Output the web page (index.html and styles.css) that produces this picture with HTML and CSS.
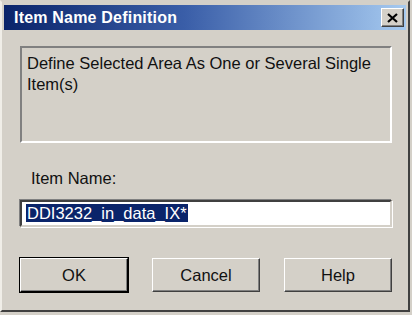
FILE: index.html
```html
<!DOCTYPE html>
<html lang="en">
<head>
    <meta charset="UTF-8">
    <title>Item Name Definition</title>
    <link rel="stylesheet" href="styles.css">
</head>
<body>

    <div class="window">
        <div class="titlebar">
            <span class="title">Item Name Definition</span>
            <button class="close-btn" aria-label="Close">
                <svg width="11" height="10" viewBox="0 0 11 10">
                    <path d="M1 1 L10 9 M10 1 L1 9" stroke="#000" stroke-width="2.2" fill="none"/>
                </svg>
            </button>
        </div>

        <div class="content">
            <div class="description">
                Define Selected Area As One or Several Single Item(s)
            </div>

            <div class="field-label">Item Name:</div>
            <div class="input-box">
                <span class="selected">DDI3232_in_data_IX*</span>
            </div>

            <div class="buttons">
                <button class="btn default">OK</button>
                <button class="btn">Cancel</button>
                <button class="btn">Help</button>
            </div>
        </div>
    </div>

</body>
</html>
```

FILE: styles.css
```css
/* Classic win-style dialog */
:root {
    --face: #d4d0c8;
    --light: #ffffff;
    --shadow: #808080;
    --dark: #404040;
    --select: #0a246a;
}

html, body {
    margin: 0;
    height: 100%;
    overflow: hidden;
    background: var(--face);
}

body {
    font-family: "Liberation Sans", Arial, sans-serif;
    color: #111;
}

.window {
    width: 410px;
    height: 312px;
    box-sizing: border-box;
    background: var(--face);
    border-top: 2px solid var(--face);
    border-left: 2px solid #f0eee8;
    border-right: 2px solid var(--dark);
    border-bottom: 2px solid var(--dark);
    padding: 3px 2px 0 2px;
}

.titlebar {
    height: 25px;
    display: flex;
    align-items: center;
    justify-content: space-between;
    padding: 0 2px 0 10px;
    background: linear-gradient(to right, #0a246a 0%, #3a5ea8 45%, #a6caf0 100%);
}

.title {
    color: #fff;
    font-weight: bold;
    font-size: 16px;
    letter-spacing: 0.2px;
}

.close-btn {
    width: 23px;
    height: 19px;
    padding: 0;
    display: flex;
    align-items: center;
    justify-content: center;
    background: var(--face);
    border: 1px solid;
    border-color: var(--light) var(--dark) var(--dark) var(--light);
    box-shadow: inset -1px -1px 0 var(--shadow);
}

.content {
    padding: 16px 14px 0 16px;
}

.description {
    height: 97px;
    box-sizing: border-box;
    border: 2px solid;
    border-color: var(--shadow) var(--light) var(--light) var(--shadow);
    padding: 5px 5px;
    font-size: 16.5px;
    line-height: 21px;
}

.field-label {
    margin-top: 25px;
    padding-left: 11px;
    font-size: 16.5px;
    line-height: 20px;
}

.input-box {
    margin-top: 12px;
    height: 27px;
    box-sizing: border-box;
    background: #fff;
    border: 2px solid;
    border-color: var(--dark) var(--face) var(--face) var(--dark);
    box-shadow: -1px -1px 0 var(--shadow), 1px 1px 0 var(--light);
    padding: 1px 4px;
    font-size: 16.5px;
    line-height: 20px;
}

.selected {
    background: var(--select);
    color: #fff;
    padding: 0 1px;
}

.buttons {
    display: flex;
    justify-content: space-between;
    margin-top: 31px;
}

.btn {
    width: 108px;
    height: 34px;
    font-family: inherit;
    font-size: 16.5px;
    color: #111;
    background: var(--face);
    border: 1px solid;
    border-color: var(--light) var(--dark) var(--dark) var(--light);
    box-shadow: inset -1px -1px 0 var(--shadow);
}

.btn.default {
    outline: 1px solid #000;
    border-color: var(--light) #000 #000 var(--light);
}
```
